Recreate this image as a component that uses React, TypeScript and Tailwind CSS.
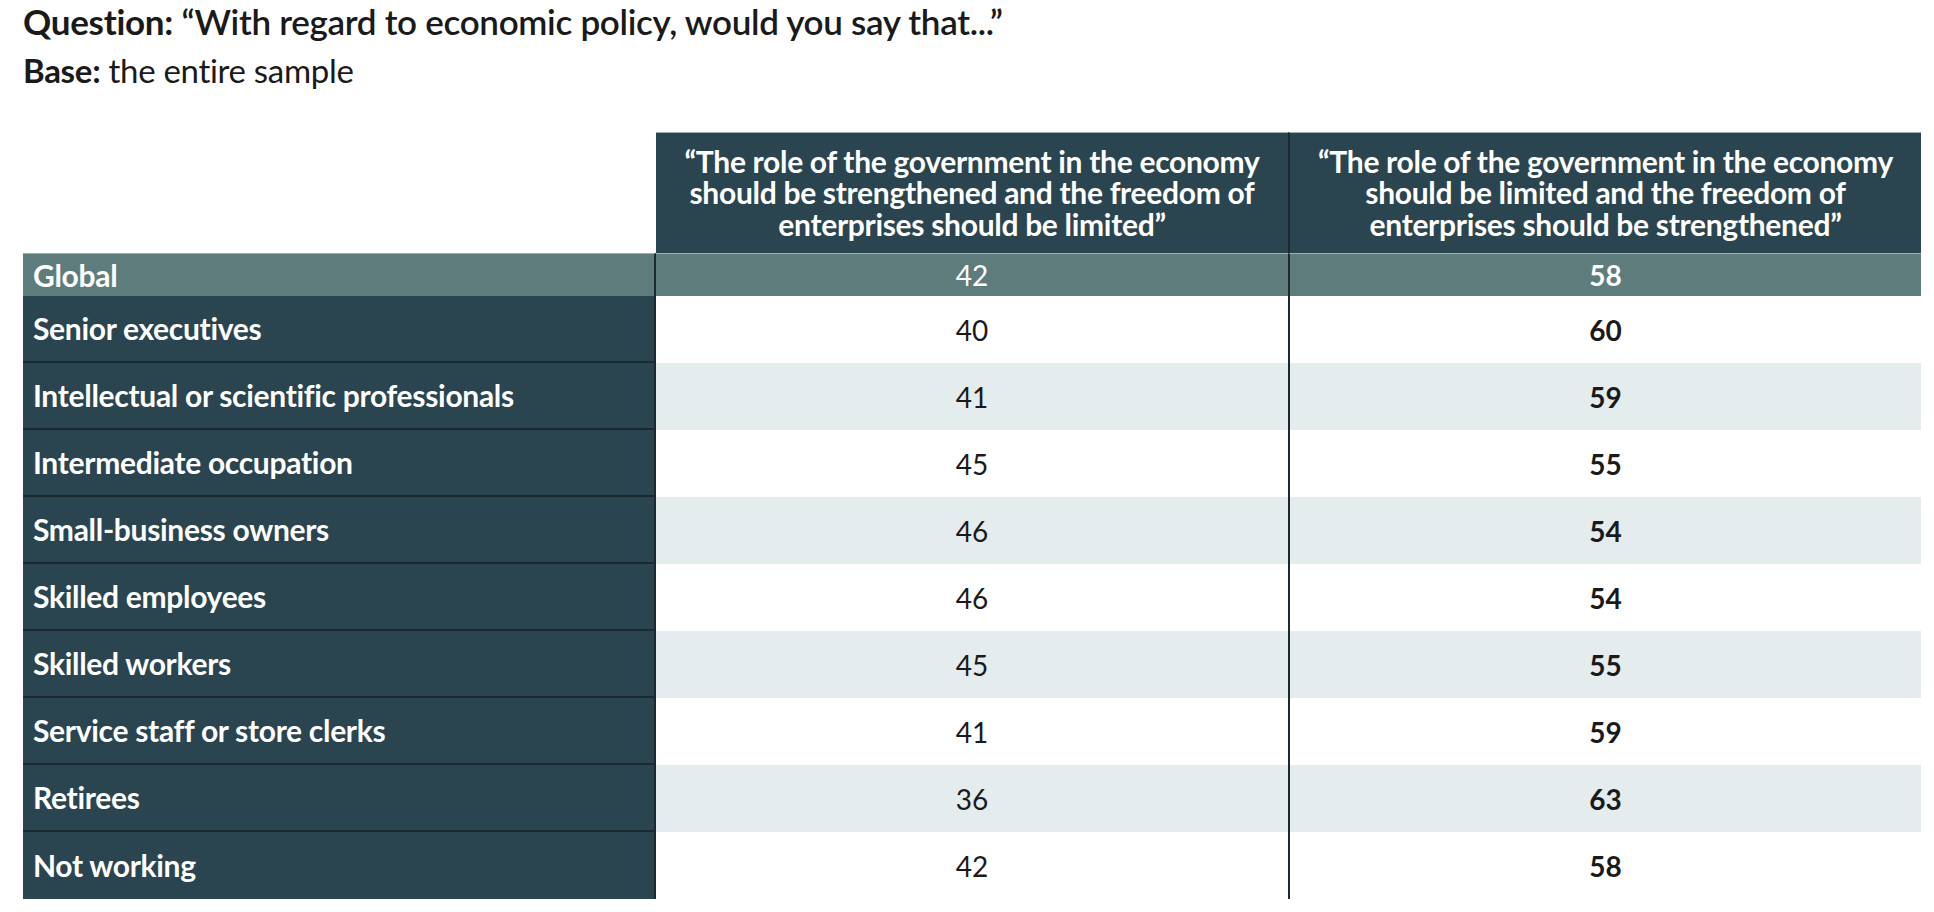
const rows: { label: string; a: number; b: number }[] = [
  { label: 'Senior executives', a: 40, b: 60 },
  { label: 'Intellectual or scientific professionals', a: 41, b: 59 },
  { label: 'Intermediate occupation', a: 45, b: 55 },
  { label: 'Small-business owners', a: 46, b: 54 },
  { label: 'Skilled employees', a: 46, b: 54 },
  { label: 'Skilled workers', a: 45, b: 55 },
  { label: 'Service staff or store clerks', a: 41, b: 59 },
  { label: 'Retirees', a: 36, b: 63 },
  { label: 'Not working', a: 42, b: 58 },
];

export default function App() {
  return (
    <div className="min-h-screen bg-white pl-[23px] font-['Lato',sans-serif] text-[#1a1a1a]">
      {/* Heading */}
      <p className="text-[35px] leading-[42px] tracking-[-0.3px]">
        <span className="font-bold">Question:</span>{' '}
        <span className="font-semibold">“With regard to economic policy, would you say that...”</span>
      </p>
      <p className="mt-[10px] text-[33px] leading-[36px] tracking-[-0.3px]">
        <span className="font-bold">Base:</span> the entire sample
      </p>

      {/* Table */}
      <div className="mt-[44px] grid grid-cols-[633px_632px_633px]">
        <div className="h-[121px]" />
        <div className="flex h-[121px] items-center justify-center border-t border-[#9fb0b4] bg-[#2a4550] text-center text-[30px] font-bold leading-[31.5px] tracking-[-0.3px] text-white">
          <span>
            “The role of the government in the economy
            <br />
            should be strengthened and the freedom of
            <br />
            enterprises should be limited”
          </span>
        </div>
        <div className="flex h-[121px] items-center justify-center border-l-2 border-t border-l-[#1b2a30] border-t-[#9fb0b4] bg-[#2a4550] text-center text-[30px] font-bold leading-[31.5px] tracking-[-0.3px] text-white">
          <span>
            “The role of the government in the economy
            <br />
            should be limited and the freedom of
            <br />
            enterprises should be strengthened”
          </span>
        </div>

        {/* Global */}
        <div className="flex h-[43px] items-center border-r-2 border-t border-r-[#1b2a30] border-t-[#9fb0b4] bg-[#5f7c7d] pl-[10px] text-[30px] font-bold tracking-[-0.3px] text-white">
          Global
        </div>
        <div className="flex h-[43px] items-center justify-center border-t border-[#9fb0b4] bg-[#5f7c7d] text-[28px] text-white">
          42
        </div>
        <div className="flex h-[43px] items-center justify-center border-l-2 border-t border-l-[#1b2a30] border-t-[#9fb0b4] bg-[#5f7c7d] text-[28px] font-bold text-white">
          58
        </div>

        {rows.map((r, i) => {
          const last = i === rows.length - 1;
          const bg = i % 2 === 1 ? 'bg-[#e4ecee]' : 'bg-white';
          return (
            <div key={r.label} className="contents">
              <div
                className={
                  'flex h-[67px] items-center border-r-2 border-r-[#1b2a30] bg-[#2a4550] pl-[10px] text-[30px] font-bold tracking-[-0.3px] text-white ' +
                  (last ? '' : 'border-b-2 border-b-[#1b2a30]')
                }
              >
                {r.label}
              </div>
              <div className={'flex h-[67px] items-center justify-center text-[28px] ' + bg}>{r.a}</div>
              <div
                className={
                  'flex h-[67px] items-center justify-center border-l-2 border-l-[#1b2a30] text-[28px] font-bold ' + bg
                }
              >
                {r.b}
              </div>
            </div>
          );
        })}
      </div>
    </div>
  );
}
